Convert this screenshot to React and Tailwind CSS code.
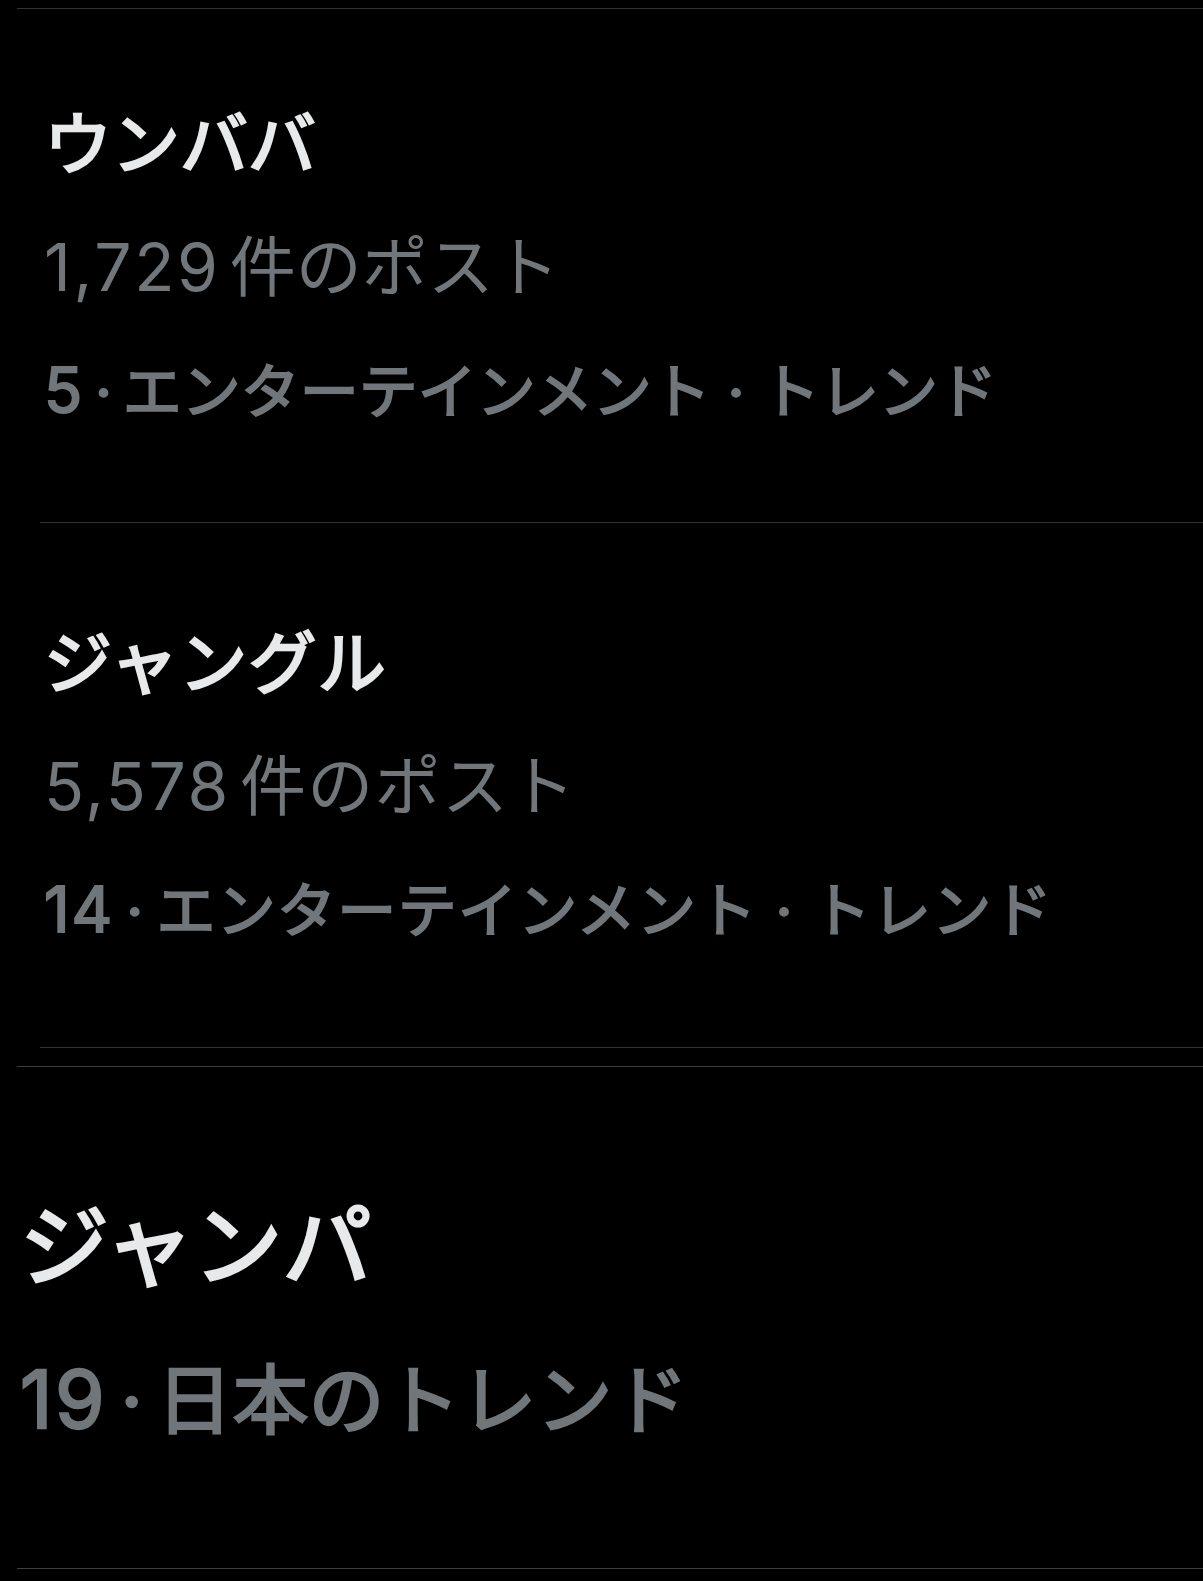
const font = { fontFamily: 'Inter, "Noto Sans CJK JP", sans-serif' }

const trends = [
  { title: 'ウンババ', count: '1,729', rank: '5', box: 'pt-[73px] pb-[68px]' },
  { title: 'ジャングル', count: '5,578', rank: '14', box: 'pt-[78px] pb-[74px] tracking-[1.3px]' },
]

function TrendItem({ item }) {
  return (
    <div className={`border-b border-[#2f3336] pl-[4px] ${item.box}`}>
      <div className="text-[68px] leading-[124px] text-[#e7e9ea] [-webkit-text-stroke:2.5px_#e7e9ea]">
        {item.title}
      </div>
      <div className="text-[66px] leading-[122px] text-[#71767b]">
        <span className="mr-[9px] tracking-[0.04em]">{item.count}</span>件のポスト
      </div>
      <div className="text-[59px] leading-[124px] text-[#71767b] [-webkit-text-stroke:2px_#71767b]">
        <span className="text-[63px] tracking-[0.03em]">{item.rank}</span>
        {'\u2009·\u2009'}エンターテインメント · トレンド
      </div>
    </div>
  )
}

export default function App() {
  return (
    <div className="min-h-screen overflow-hidden bg-black" style={font}>
      <div className="pl-[17px] pt-[8px]">
        <div className="border-t border-[#2f3336] pl-[23px]">
          {trends.map((t) => (
            <TrendItem key={t.title} item={t} />
          ))}
        </div>
        <div className="mt-[18px] border-y border-[#3a3f44] pl-[3px] pt-[114px] pb-[103px]">
          <div className="text-[89px] leading-[130px] text-[#e7e9ea] [-webkit-text-stroke:3px_#e7e9ea]">
            ジャンパ
          </div>
          <div className="mt-[23px] text-[76px] leading-[130px] text-[#71767b] [-webkit-text-stroke:2.4px_#71767b]">
            <span className="text-[80px] tracking-[0.03em]">19</span>
            {'\u2009·\u2009'}日本のトレンド
          </div>
        </div>
      </div>
    </div>
  )
}
